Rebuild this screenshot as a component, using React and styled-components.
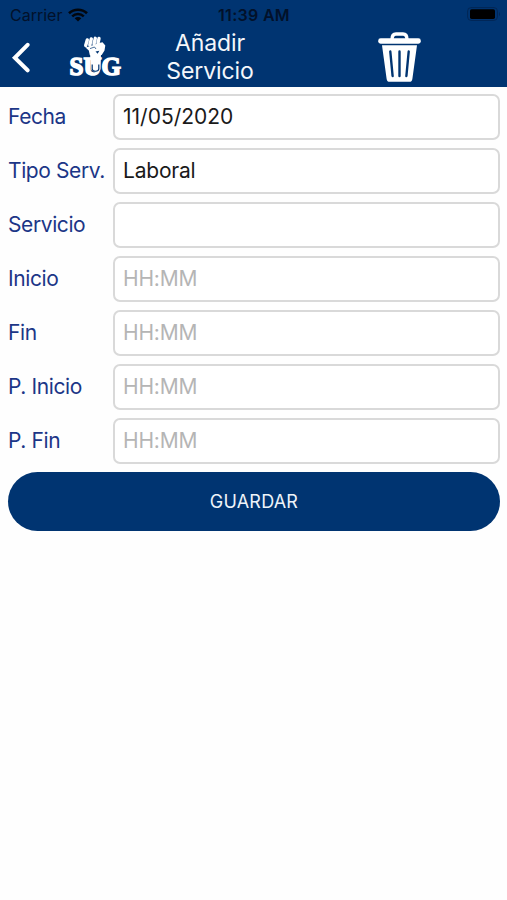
import React, { useState } from 'react';
import styled, { createGlobalStyle } from 'styled-components';

const fields = [
    { name: 'fecha', label: 'Fecha', value: '11/05/2020', spacing: '0px' },
    { name: 'tipo', label: 'Tipo Serv.', value: 'Laboral' },
    { name: 'servicio', label: 'Servicio', value: '' },
    { name: 'inicio', label: 'Inicio', value: '', placeholder: 'HH:MM' },
    { name: 'fin', label: 'Fin', value: '', placeholder: 'HH:MM' },
    { name: 'pInicio', label: 'P. Inicio', value: '', placeholder: 'HH:MM' },
    { name: 'pFin', label: 'P. Fin', value: '', placeholder: 'HH:MM' },
];

function WifiIcon() {
    return (
        <svg width="20" height="14" viewBox="0 0 20 14" fill="none" stroke="#02060d">
            <path d="M1 5.2C6 .6 14 .6 19 5.2" strokeWidth="2.7" />
            <path d="M4.2 8.3c3.3-3 8.3-3 11.6 0" strokeWidth="2.5" />
            <path d="M10 13.4 6.7 10.3c1.9-1.7 4.7-1.7 6.6 0z" fill="#02060d" stroke="none" />
        </svg>
    )
}

function BatteryIcon() {
    return (
        <svg width="34" height="14" viewBox="0 0 34 14">
            <rect x=".6" y=".6" width="29.8" height="12.8" rx="3.5" fill="none" stroke="#022654" />
            <rect x="3" y="2.3" width="25" height="9.6" rx="1.6" fill="#000" />
            <path d="M32 5v4c1.3-.7 1.3-3.3 0-4z" fill="#022654" />
        </svg>
    )
}

function BackIcon() {
    return (
        <svg width="20" height="32" viewBox="0 0 20 32" fill="none" stroke="#fff" strokeWidth="4">
            <path d="M16.6 3.8 3.8 16.8l12.8 12.5" strokeLinecap="round" />
        </svg>
    )
}

function Logo() {
    return (
        <svg width="58" height="54" viewBox="0 0 58 54">
            <text x="3.5" y="45.2" textLength="51.5" lengthAdjust="spacingAndGlyphs" fill="#fff" stroke="#fff" strokeWidth="1.6"
                fontFamily="'Liberation Serif', serif" fontWeight="700" fontSize="26">SUG</text>
            {/* forearm coming out of the U */}
            <path d="M24 23h11l-.5 16c-.5 3.5-9 3.5-9.5 0z" fill="#fff" />
            <path d="M26.2 34.5V39c.3 3 6.300 3 6.600 0v-4.500" fill="none" stroke="#003471" strokeWidth="1.2" />
            {/* fingers */}
            <g stroke="#fff" strokeWidth="3.4" strokeLinecap="round">
                <path d="m21.300 10-1.600 5.500M25.300 8.900l-1.500 6.100M29.300 8.300l-1.300 5.700M33 8.500l-1 4.700" />
            </g>
            {/* palm and thumb */}
            <path d="m19.500 17.500 8-2.500 5.500-2 3.500-.7 2.800 3.200-.8 5-2.800 4.500H23.800l-1-4.500z" fill="#fff" />
            <path d="m24 18.600 4.500-1.600 1.500 2" fill="none" stroke="#003471" strokeWidth=".7" />
            <path d="m29.500 21.500 3.800-.7-1.600 3z" fill="#003471" />
        </svg>
    )
}

function TrashIcon() {
    return (
        <svg width="44" height="52" viewBox="0 0 44 52">
            <path d="M14 8.5C14 4.500 15.500 3 18 3h7c2.500 0 4 1.500 4 5.500" fill="none" stroke="#fff" strokeWidth="3.4" />
            <rect x=".2" y="7.3" width="42.6" height="5.4" rx="2.4" fill="#fff" />
            <path d="M4 14.2h35l-4.600 33.500c-.3 2.300-1.400 3.100-3 3.100H11.600c-1.600 0-2.700-.8-3-3.100z" fill="#fff" />
            <path d="m12.300 20.500 2.300 24.500M21.500 20.500V45M30.700 20.500 28.400 45" stroke="#003471" strokeWidth="2.4" strokeLinecap="round" />
        </svg>
    )
}

function App() {

    const [values, setValues] = useState(
        Object.fromEntries(fields.map((field) => [field.name, field.value]))
    );

    const onChange = (e) => setValues({ ...values, [e.target.name]: e.target.value });

    return (
        <Container>
            <GlobalStyle />
            <Header>
                <StatusBar>
                    <Carrier>
                        <span>Carrier</span>
                        <WifiIcon />
                    </Carrier>
                    <Time>11:39 AM</Time>
                    <BatteryIcon />
                </StatusBar>
                <NavBar>
                    <IconButton aria-label="Volver"><BackIcon /></IconButton>
                    <Logo />
                    <Title>Añadir<br />Servicio</Title>
                    <IconButton aria-label="Eliminar"><TrashIcon /></IconButton>
                </NavBar>
            </Header>
            <Form onSubmit={(e) => e.preventDefault()}>
                {fields.map((field) => (
                    <Row key={field.name}>
                        <Label htmlFor={field.name}>{field.label}</Label>
                        <Input
                            id={field.name}
                            name={field.name}
                            value={values[field.name]}
                            placeholder={field.placeholder}
                            onChange={onChange}
                            $spacing={field.spacing}
                        />
                    </Row>
                ))}
                <SaveButton type="submit">GUARDAR</SaveButton>
            </Form>
        </Container>
    )
}

export default App;


const GlobalStyle = createGlobalStyle`

    * {
        box-sizing: border-box;
    }

    body {
        margin: 0;
        background: white;
        font-family: Inter, "Liberation Sans", sans-serif;
    }

    svg {
        display: block;
        flex-shrink: 0;
    }

`

const Container = styled.div`

    min-height: 100vh;
    background: #fefefe;

`

const Header = styled.header`

    height: 87px;
    background: #003471;

`

const StatusBar = styled.div`

    display: grid;
    grid-template-columns: 1fr auto 1fr;
    align-items: center;
    height: 29px;
    padding: 0 6px 0 10px;
    color: #02112a;

    > svg {
        justify-self: end;
        margin-bottom: 1px;
    }

`

const Carrier = styled.div`

    display: flex;
    align-items: center;
    gap: 6px;
    font-size: 16px;

`

const Time = styled.div`

    margin-right: 3px;
    font-size: 16px;
    font-weight: 600;
    letter-spacing: 0.3px;

`

const NavBar = styled.nav`

    display: grid;
    grid-template-columns: 55px 57px 255px 1fr;
    align-items: center;
    height: 58px;
    padding: 0 0 2px 11px;

`

const IconButton = styled.button`

    display: flex;
    padding: 0;
    border: none;
    background: none;
    cursor: pointer;

`

const Title = styled.h1`

    width: 174px;
    margin: 0;
    color: #f4f7fb;
    font-size: 23px;
    font-weight: 400;
    line-height: 28px;
    letter-spacing: -0.1px;
    text-align: center;

`

const Form = styled.form`

    display: flex;
    flex-direction: column;
    gap: 8px;
    padding: 7px 7px 0 8px;

`

const Row = styled.div`

    display: grid;
    grid-template-columns: 105px 1fr;
    align-items: center;
    height: 46px;

`

const Label = styled.label`

    padding-bottom: 2px;
    color: #1c3687;
    font-size: 21px;
    letter-spacing: -0.4px;
    white-space: nowrap;

`

const Input = styled.input`

    width: 100%;
    height: 46px;
    padding: 0 8px 2px;
    border: 2px solid #d9d9d9;
    border-radius: 7px;
    outline: none;
    background: white;
    color: #1a1a1a;
    font-family: inherit;
    font-size: 21px;
    letter-spacing: ${props => props.$spacing || '-0.2px'};

    &::placeholder {
        color: #b5b5b5;
        opacity: 1;
    }

`

const SaveButton = styled.button`

    height: 59px;
    border: none;
    border-radius: 30px;
    background: #003471;
    color: #eef3f9;
    font-family: inherit;
    font-size: 18px;
    letter-spacing: 0.2px;
    cursor: pointer;

`
